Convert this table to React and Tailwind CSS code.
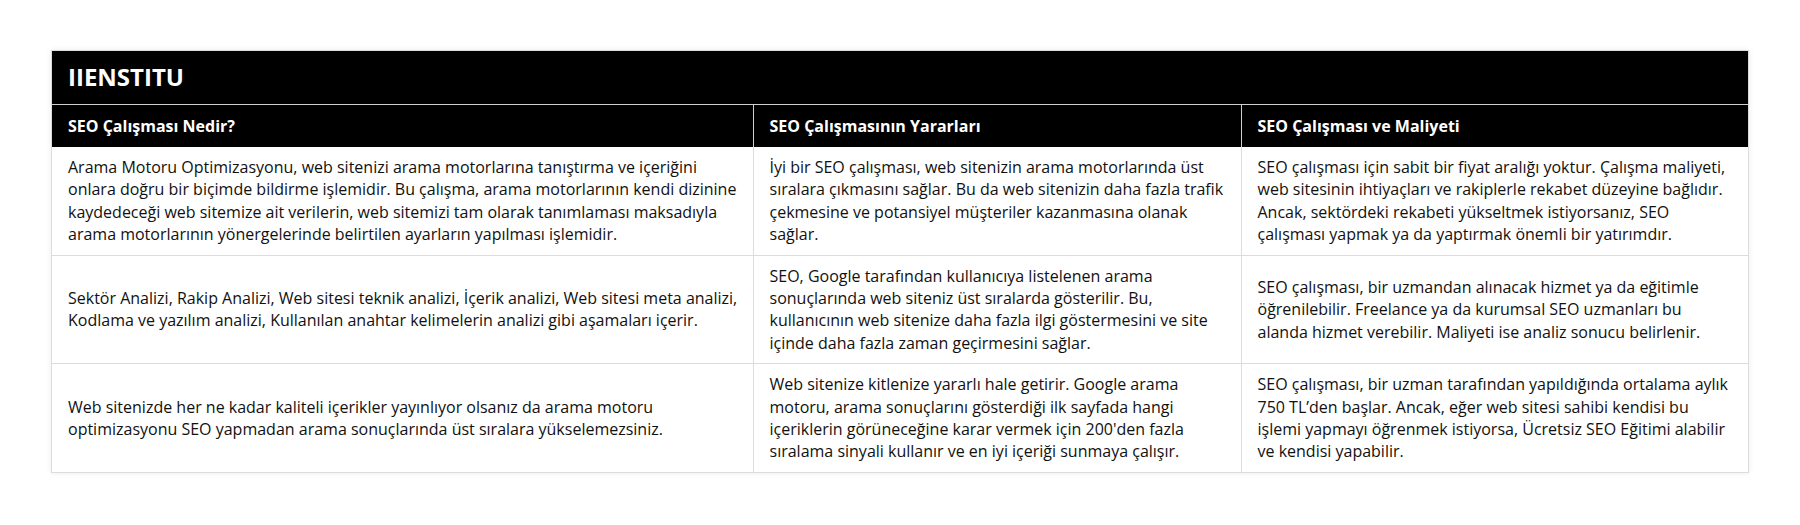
const rows = [
  [
    'Arama Motoru Optimizasyonu, web sitenizi arama motorlarına tanıştırma ve içeriğini onlara doğru bir biçimde bildirme işlemidir. Bu çalışma, arama motorlarının kendi dizinine kaydedeceği web sitemize ait verilerin, web sitemizi tam olarak tanımlaması maksadıyla arama motorlarının yönergelerinde belirtilen ayarların yapılması işlemidir.',
    'İyi bir SEO çalışması, web sitenizin arama motorlarında üst sıralara çıkmasını sağlar. Bu da web sitenizin daha fazla trafik çekmesine ve potansiyel müşteriler kazanmasına olanak sağlar.',
    'SEO çalışması için sabit bir fiyat aralığı yoktur. Çalışma maliyeti, web sitesinin ihtiyaçları ve rakiplerle rekabet düzeyine bağlıdır. Ancak, sektördeki rekabeti yükseltmek istiyorsanız, SEO çalışması yapmak ya da yaptırmak önemli bir yatırımdır.',
  ],
  [
    'Sektör Analizi, Rakip Analizi, Web sitesi teknik analizi, İçerik analizi, Web sitesi meta analizi, Kodlama ve yazılım analizi, Kullanılan anahtar kelimelerin analizi gibi aşamaları içerir.',
    'SEO, Google tarafından kullanıcıya listelenen arama sonuçlarında web siteniz üst sıralarda gösterilir. Bu, kullanıcının web sitenize daha fazla ilgi göstermesini ve site içinde daha fazla zaman geçirmesini sağlar.',
    'SEO çalışması, bir uzmandan alınacak hizmet ya da eğitimle öğrenilebilir. Freelance ya da kurumsal SEO uzmanları bu alanda hizmet verebilir. Maliyeti ise analiz sonucu belirlenir.',
  ],
  [
    'Web sitenizde her ne kadar kaliteli içerikler yayınlıyor olsanız da arama motoru optimizasyonu SEO yapmadan arama sonuçlarında üst sıralara yükselemezsiniz.',
    "Web sitenize kitlenize yararlı hale getirir. Google arama motoru, arama sonuçlarını gösterdiği ilk sayfada hangi içeriklerin görüneceğine karar vermek için 200'den fazla sıralama sinyali kullanır ve en iyi içeriği sunmaya çalışır.",
    'SEO çalışması, bir uzman tarafından yapıldığında ortalama aylık 750 TL’den başlar. Ancak, eğer web sitesi sahibi kendisi bu işlemi yapmayı öğrenmek istiyorsa, Ücretsiz SEO Eğitimi alabilir ve kendisi yapabilir.',
  ],
];

const headers = ['SEO Çalışması Nedir?', 'SEO Çalışmasının Yararları', 'SEO Çalışması ve Maliyeti'];

// first column gets a slightly tighter right padding so its lines wrap like the reference
const cellPad = ['pl-4 pr-[10px]', 'border-l border-[#dcdcdc] px-4', 'border-l border-[#dcdcdc] px-4'];

export default function App() {
  return (
    <div className="min-h-[525px] bg-white px-[51px] pt-[50px] font-['Open_Sans',sans-serif] text-[#111]">
      <div className="border border-[#dcdcdc] shadow-[0_0_6px_rgba(0,0,0,0.08)]">
        <table className="w-full table-fixed border-collapse">
          <colgroup>
            <col className="w-[701px]" />
            <col className="w-[488px]" />
            <col />
          </colgroup>
          <thead>
            <tr>
              <th colSpan={3} className="h-[53px] bg-black px-4 text-left text-[24px] font-bold text-white">
                IIENSTITU
              </th>
            </tr>
            <tr>
              {headers.map((h, i) => (
                <th
                  key={h}
                  className={`h-[43px] border-t border-[#d0d0d0] bg-black px-4 text-left text-[16px] font-bold text-white ${i > 0 ? 'border-l' : ''}`}
                >
                  {h}
                </th>
              ))}
            </tr>
          </thead>
          <tbody>
            {rows.map((row, r) => (
              <tr key={r} className={r > 0 ? 'border-t border-[#dcdcdc]' : ''}>
                {row.map((cell, i) => (
                  <td key={i} className={`py-[9px] align-middle text-[16px] leading-[22.4px] ${cellPad[i]}`}>
                    {cell}
                  </td>
                ))}
              </tr>
            ))}
          </tbody>
        </table>
      </div>
    </div>
  );
}
